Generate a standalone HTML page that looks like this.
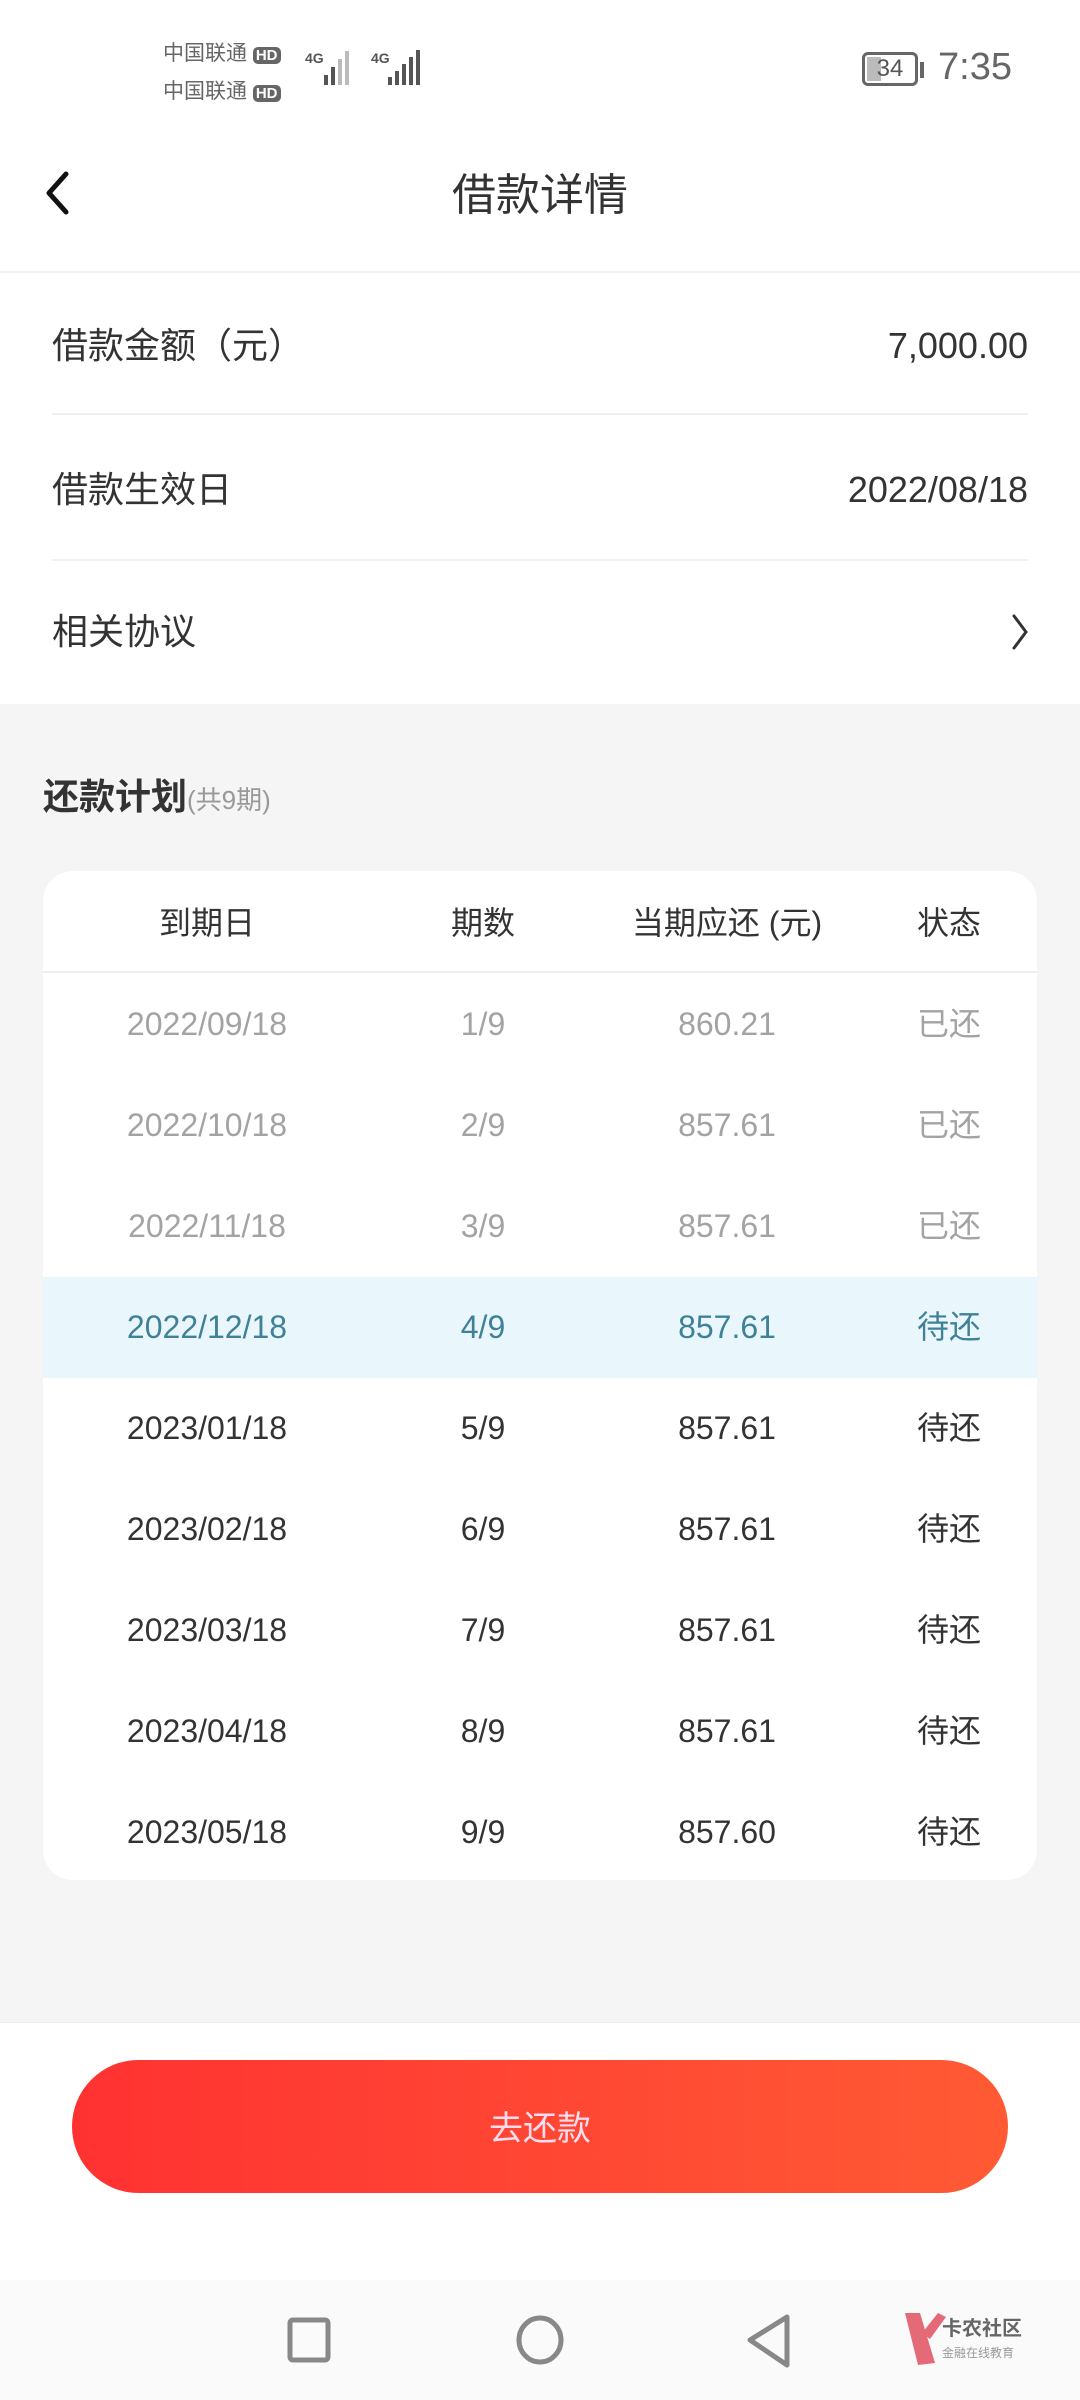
<!DOCTYPE html>
<html><head><meta charset="utf-8"><style>
*{margin:0;padding:0;box-sizing:border-box}
body{width:1080px;height:2400px;position:relative;background:#f5f5f5;font-family:"Liberation Sans","Noto Sans CJK SC",sans-serif;overflow:hidden;color:#333}
.abs{position:absolute}
.top{left:0;top:0;width:1080px;height:704px;background:#fff}
.row{left:52px;width:976px;font-size:36px;color:#333;height:60px;line-height:60px}
.row .v{position:absolute;right:0;top:0}
.line{left:52px;width:976px;height:2px;background:#f0f0f0}
.card{left:43px;top:871px;width:994px;height:1009px;background:#fff;border-radius:30px;overflow:hidden}
.tr{position:absolute;left:0;width:994px;height:101px;font-size:32px}
.tr span{position:absolute;top:0;line-height:101px;transform:translateX(-50%);white-space:nowrap}
.c1{left:164px}.c2{left:440px}.c3{left:684px}.c4{left:906px}
.paid{color:#a3a3a3}.cur{color:#3f8197;background:#e9f7fc}.todo{color:#333}
</style></head><body>
<div class="abs top"></div>
<div class="abs" style="left:163px;top:36px;font-size:21px;color:#666;line-height:36px">中国联通 <span style="background:#666;color:#fff;border-radius:5px;font-size:15px;padding:0 3px;font-weight:bold">HD</span><br>中国联通 <span style="background:#666;color:#fff;border-radius:5px;font-size:15px;padding:0 3px;font-weight:bold">HD</span></div>
<svg class="abs" style="left:300px;top:45px" width="130" height="45">
<text x="5" y="18" font-size="14" font-weight="bold" fill="#555" font-family="Liberation Sans">4G</text>
<rect x="24" y="30" width="4" height="10" fill="#555"/><rect x="31" y="22" width="4" height="18" fill="#555"/><rect x="38" y="14" width="4" height="26" fill="#bbb"/><rect x="45" y="6" width="4" height="34" fill="#bbb"/>
<text x="71" y="18" font-size="14" font-weight="bold" fill="#555" font-family="Liberation Sans">4G</text>
<rect x="88" y="32" width="4" height="8" fill="#555"/><rect x="95" y="26" width="4" height="14" fill="#555"/><rect x="102" y="19" width="4" height="21" fill="#555"/><rect x="109" y="12" width="4" height="28" fill="#555"/><rect x="116" y="5" width="4" height="35" fill="#555"/>
</svg>
<div class="abs" style="left:862px;top:52px;width:56px;height:34px;border:3px solid #666;border-radius:6px;font-size:24px;line-height:28px;color:#555;text-align:center"><div class="abs" style="left:2px;top:2px;width:14px;height:24px;background:#bbb"></div><span style="position:relative">34</span></div>
<div class="abs" style="left:920px;top:62px;width:4px;height:16px;background:#666"></div>
<div class="abs" style="left:938px;top:46px;font-size:38px;color:#666">7:35</div>
<svg class="abs" style="left:40px;top:168px" width="34" height="50"><path d="M26 6 L9 25 L26 44" stroke="#111" stroke-width="5" fill="none" stroke-linecap="round" stroke-linejoin="round"/></svg>
<div class="abs" style="left:0;width:1080px;top:159px;text-align:center;font-size:44px;color:#333">借款详情</div>
<div class="abs" style="left:0;top:271px;width:1080px;height:2px;background:#f0f0f0"></div>
<div class="abs row" style="top:316px">借款金额（元）<span class="v">7,000.00</span></div>
<div class="abs line" style="top:413px"></div>
<div class="abs row" style="top:460px">借款生效日<span class="v">2022/08/18</span></div>
<div class="abs line" style="top:559px"></div>
<div class="abs row" style="top:602px">相关协议</div>
<svg class="abs" style="left:1010px;top:612px" width="22" height="40"><path d="M4 4 L16 20 L4 36" stroke="#333" stroke-width="3" fill="none" stroke-linecap="round"/></svg>
<div class="abs" style="left:43px;top:768px;font-size:36px;font-weight:bold;color:#333">还款计划<span style="font-size:26px;font-weight:normal;color:#999">(共9期)</span></div>
<div class="abs card">
 <div class="tr todo" style="top:0;height:100px"><span class="c1" style="line-height:104px">到期日</span><span class="c2" style="line-height:104px">期数</span><span class="c3" style="line-height:104px">当期应还 (元)</span><span class="c4" style="line-height:104px">状态</span></div>
 <div class="abs" style="left:0;top:100px;width:994px;height:2px;background:#eee"></div>
 <div class="tr paid" style="top:103px"><span class="c1">2022/09/18</span><span class="c2">1/9</span><span class="c3">860.21</span><span class="c4">已还</span></div>
 <div class="tr paid" style="top:204px"><span class="c1">2022/10/18</span><span class="c2">2/9</span><span class="c3">857.61</span><span class="c4">已还</span></div>
 <div class="tr paid" style="top:305px"><span class="c1">2022/11/18</span><span class="c2">3/9</span><span class="c3">857.61</span><span class="c4">已还</span></div>
 <div class="tr cur" style="top:406px"><span class="c1">2022/12/18</span><span class="c2">4/9</span><span class="c3">857.61</span><span class="c4">待还</span></div>
 <div class="tr todo" style="top:507px"><span class="c1">2023/01/18</span><span class="c2">5/9</span><span class="c3">857.61</span><span class="c4">待还</span></div>
 <div class="tr todo" style="top:608px"><span class="c1">2023/02/18</span><span class="c2">6/9</span><span class="c3">857.61</span><span class="c4">待还</span></div>
 <div class="tr todo" style="top:709px"><span class="c1">2023/03/18</span><span class="c2">7/9</span><span class="c3">857.61</span><span class="c4">待还</span></div>
 <div class="tr todo" style="top:810px"><span class="c1">2023/04/18</span><span class="c2">8/9</span><span class="c3">857.61</span><span class="c4">待还</span></div>
 <div class="tr todo" style="top:911px"><span class="c1">2023/05/18</span><span class="c2">9/9</span><span class="c3">857.60</span><span class="c4">待还</span></div>
</div>
<div class="abs" style="left:0;top:2022px;width:1080px;height:258px;background:#fff;border-top:1px solid #eee"></div>
<div class="abs" style="left:72px;top:2060px;width:936px;height:133px;border-radius:67px;background:linear-gradient(90deg,#ff3232,#ff5a34);color:#fde;font-size:34px;text-align:center;line-height:138px">去还款</div>
<div class="abs" style="left:0;top:2280px;width:1080px;height:120px;background:#fafafa"></div>
<svg class="abs" style="left:0;top:2273px" width="1080" height="120">
<rect x="290" y="47" width="38" height="40" rx="3" fill="none" stroke="#888" stroke-width="5"/>
<ellipse cx="540" cy="67" rx="21" ry="22" fill="none" stroke="#888" stroke-width="5"/>
<path d="M787 44 L750 67 L787 92 Z" fill="none" stroke="#888" stroke-width="5" stroke-linejoin="round"/>
<path d="M905 40 L920 40 L935 90 L918 92 Z" fill="#e56a78"/><path d="M922 60 L938 40 L946 44 L930 66 Z" fill="#e56a78"/>
<text x="942" y="62" font-size="20" font-weight="bold" fill="#666" font-family="Noto Sans CJK SC">卡农社区</text>
<text x="942" y="84" font-size="12" fill="#999" font-family="Noto Sans CJK SC">金融在线教育</text>
</svg>
</body></html>
